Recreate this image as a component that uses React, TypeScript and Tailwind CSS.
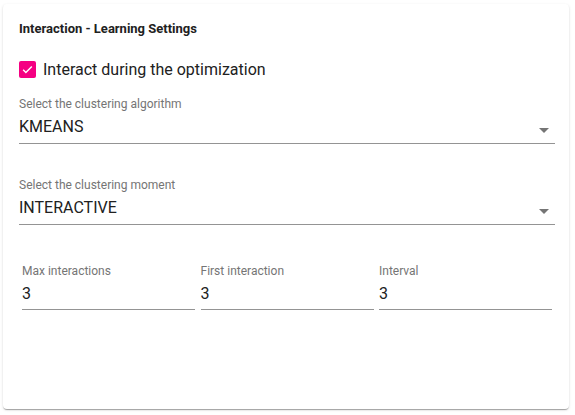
import React from "react";

function Arrow() {
  return (
    <svg width="24" height="24" viewBox="0 0 24 24" className="absolute right-[-1px] top-1/2 -translate-y-1/2">
      <path d="M7 10l5 5 5-5z" fill="rgba(0,0,0,0.54)" />
    </svg>
  );
}

function SelectField({ label, value }: { label: string; value: string }) {
  return (
    <div className="flex flex-col">
      <div className="text-[12px] leading-[14px] text-[#757575]">{label}</div>
      <div className="relative mt-[6px] border-b border-[#949494] pb-[7px]">
        <div className="text-[16px] leading-[19px] text-[#212121]">{value}</div>
        <Arrow />
      </div>
    </div>
  );
}

function NumField({ label, value }: { label: string; value: string }) {
  return (
    <div className="flex flex-col">
      <div className="text-[12px] leading-[14px] text-[#757575]">{label}</div>
      <div className="mt-[6px] border-b border-[#949494] pb-[6px] text-[16px] leading-[19px] text-[#212121]">{value}</div>
    </div>
  );
}

export default function App() {
  return (
    <div className="w-[575px] h-[415px] bg-white pt-[4px] pl-[3px]" style={{ fontFamily: "Roboto, sans-serif" }}>
      <div className="w-[566px] h-[405px] rounded-[4px] bg-white shadow-[0px_2px_1px_-1px_rgba(0,0,0,0.2),0px_1px_1px_0px_rgba(0,0,0,0.14),0px_1px_3px_0px_rgba(0,0,0,0.12)] px-[16px] pt-[16px]">
        <div className="text-[13px] leading-[18px] font-bold text-[#212121]">Interaction - Learning Settings</div>
        <div className="mt-[21px] flex items-center h-[20px]">
          <div className="w-[17px] h-[17px] rounded-[2px] bg-[#f50082] flex items-center justify-center">
            <svg width="13" height="13" viewBox="0 0 24 24">
              <path d="M4 12.5l5 5L20 6.5" fill="none" stroke="white" strokeWidth="2.6" />
            </svg>
          </div>
          <span className="ml-[7px] text-[16px] leading-[19px] text-[#212121]">Interact during the optimization</span>
        </div>
        <div className="mt-[18px] w-[536px]">
          <SelectField label="Select the clustering algorithm" value="KMEANS" />
        </div>
        <div className="mt-[34px] w-[536px]">
          <SelectField label="Select the clustering moment" value="INTERACTIVE" />
        </div>
        <div className="mt-[39px] w-[536px] px-[3px] grid grid-cols-3 gap-x-[5.5px]">
          <NumField label="Max interactions" value="3" />
          <NumField label="First interaction" value="3" />
          <NumField label="Interval" value="3" />
        </div>
      </div>
    </div>
  );
}
